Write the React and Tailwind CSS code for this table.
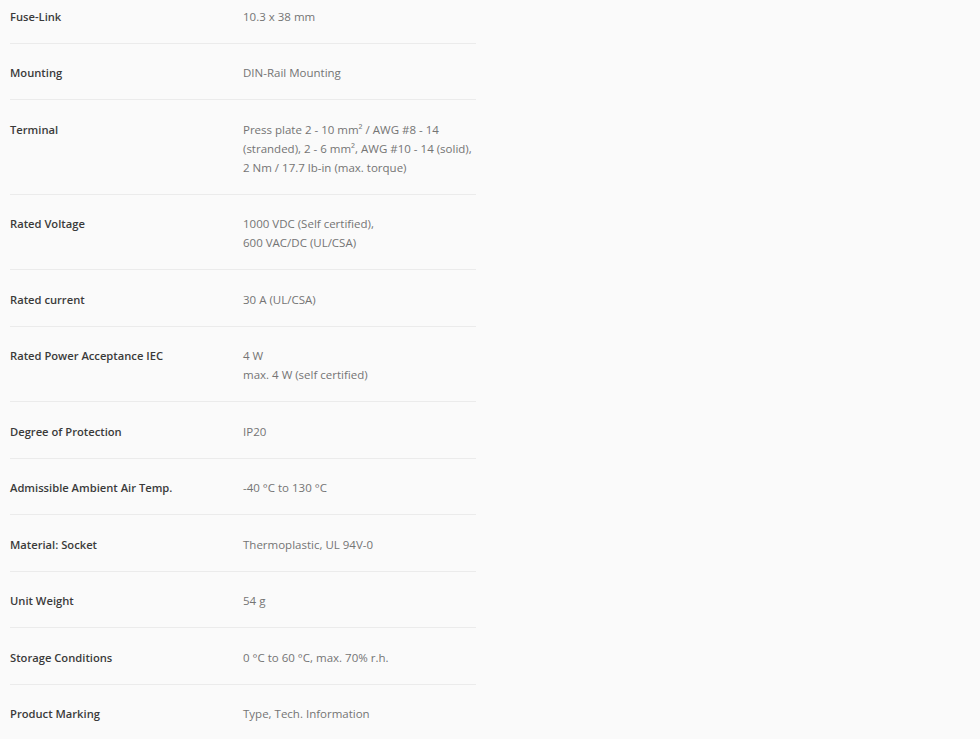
const specs = [
  { label: 'Fuse-Link', value: ['10.3 x 38 mm'] },
  { label: 'Mounting', value: ['DIN-Rail Mounting'] },
  {
    label: 'Terminal',
    value: [
      'Press plate 2 - 10 mm² / AWG #8 - 14',
      '(stranded), 2 - 6 mm², AWG #10 - 14 (solid),',
      '2 Nm / 17.7 lb-in (max. torque)',
    ],
  },
  { label: 'Rated Voltage', value: ['1000 VDC (Self certified),', '600 VAC/DC (UL/CSA)'] },
  { label: 'Rated current', value: ['30 A (UL/CSA)'] },
  { label: 'Rated Power Acceptance IEC', value: ['4 W', 'max. 4 W (self certified)'] },
  { label: 'Degree of Protection', value: ['IP20'] },
  { label: 'Admissible Ambient Air Temp.', value: ['-40 °C to 130 °C'] },
  { label: 'Material: Socket', value: ['Thermoplastic, UL 94V-0'] },
  { label: 'Unit Weight', value: ['54 g'] },
  { label: 'Storage Conditions', value: ['0 °C to 60 °C, max. 70% r.h.'] },
  { label: 'Product Marking', value: ['Type, Tech. Information'] },
]

function SpecRow({ spec, first }) {
  return (
    <div
      className={`grid grid-cols-2 border-b border-[#ebebeb] pb-[17px] ${
        first ? 'pt-[6.5px]' : 'pt-[19.5px]'
      }`}
    >
      <div className="font-semibold text-[#3a3a3a] text-[11.2px]">{spec.label}</div>
      <div className="text-[#747474] text-[11.5px]">
        {spec.value.map((line, i) => (
          <div key={i} className="whitespace-nowrap">{line}</div>
        ))}
      </div>
    </div>
  )
}

export default function App() {
  return (
    <div
      className="min-h-screen bg-[#fafafa] leading-[19px]"
      style={{ fontFamily: '"Open Sans", "Noto Sans", sans-serif' }}
    >
      <div className="w-[466px] ml-[10px]">
        {specs.map((s, i) => (
          <SpecRow key={s.label} spec={s} first={i === 0} />
        ))}
      </div>
    </div>
  )
}
